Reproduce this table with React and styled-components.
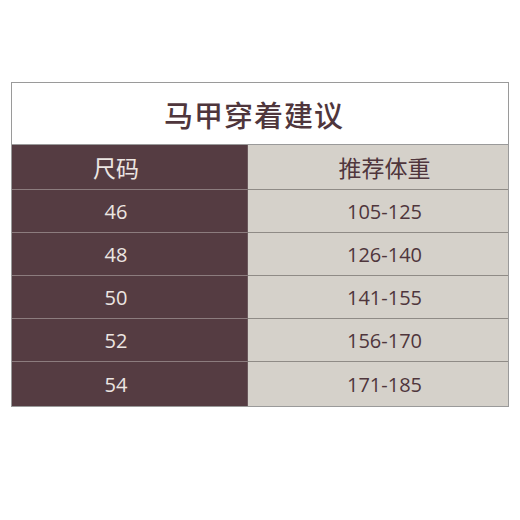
import React from 'react'
import styled, { createGlobalStyle } from 'styled-components'

const Global = createGlobalStyle`
body {
  margin: 0;
  background: #fff;
  font-family: "Open Sans", "Noto Sans CJK SC", sans-serif;
}
`

const Page = styled.div`
width: 520px;
height: 520px;
padding: 82px 11px 0 11px;
box-sizing: border-box;
`

const Table = styled.div`
border: 1px solid #9a9a9a;
display: grid;
grid-template-columns: 235px 1fr;
`

const Title = styled.div`
grid-column: 1 / 3;
height: 61px;
padding-right: 12px;
display: flex;
align-items: center;
justify-content: center;
font-size: 29px;
font-weight: 500;
color: #4f363c;
letter-spacing: 1px;
border-bottom: 1px solid #9a9a9a;
background: #fff;
`

const Cell = styled.div`
height: ${p => (p.head ? '45px' : p.last ? '44px' : '43px')};
box-sizing: border-box;
display: flex;
align-items: center;
justify-content: center;
padding: ${p => (p.dark ? '0 27px 0 0' : '0 0 0 13px')};
background: ${p => (p.dark ? '#553c42' : '#d5d1ca')};
color: ${p => (p.dark ? '#ece6e2' : '#4f363c')};
font-size: ${p => (p.head ? '23px' : '20px')};
border-bottom: ${p => (p.last ? 'none' : '1px solid ' + (p.dark ? '#8c7c7e' : '#8f8b86'))};
border-left: ${p => (p.dark ? 'none' : '1px solid #6b585c')};
`

const rows = [
  ['46', '105-125'],
  ['48', '126-140'],
  ['50', '141-155'],
  ['52', '156-170'],
  ['54', '171-185'],
]

export default function App() {
  return (
    <Page>
      <Global />
      <Table>
        <Title>马甲穿着建议</Title>
        <Cell dark head>尺码</Cell>
        <Cell head>推荐体重</Cell>
        {rows.map(([size, weight], i) => (
          <React.Fragment key={size}>
            <Cell dark last={i === rows.length - 1}>{size}</Cell>
            <Cell last={i === rows.length - 1}>{weight}</Cell>
          </React.Fragment>
        ))}
      </Table>
    </Page>
  )
}
